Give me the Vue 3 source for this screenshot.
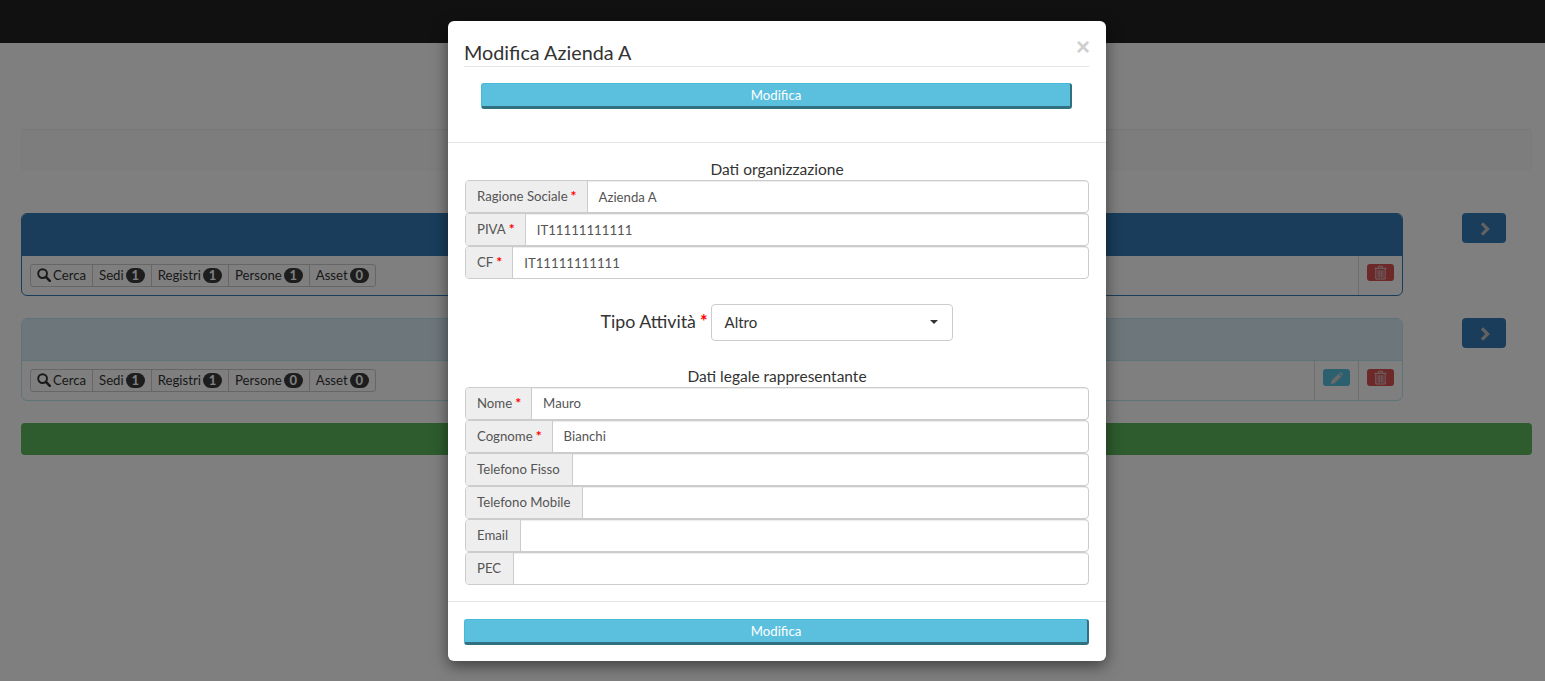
<script setup>
const panels = [
  { cls: 'primary', counts: [1, 1, 1, 0], edit: false },
  { cls: 'info', counts: [1, 1, 0, 0], edit: true },
]
const names = ['Sedi', 'Registri', 'Persone', 'Asset']
const org = [
  { label: 'Ragione Sociale', req: true, value: 'Azienda A' },
  { label: 'PIVA', req: true, value: 'IT11111111111' },
  { label: 'CF', req: true, value: 'IT11111111111' },
]
const legal = [
  { label: 'Nome', req: true, value: 'Mauro' },
  { label: 'Cognome', req: true, value: 'Bianchi' },
  { label: 'Telefono Fisso', value: '' },
  { label: 'Telefono Mobile', value: '' },
  { label: 'Email', value: '' },
  { label: 'PEC', value: '' },
]
</script>

<template>
  <div class="page">
    <div class="navbar"></div>
    <div class="content">
      <div class="well"></div>
      <div v-for="p in panels" :key="p.cls" class="row">
        <div class="panel" :class="p.cls">
          <div class="panel-head"></div>
          <div class="panel-body">
            <div class="tabs">
              <span class="tab">
                <svg class="search" viewBox="0 0 14 14" width="14" height="14">
                  <circle cx="5.6" cy="5.6" r="4.4" fill="none" stroke="currentColor" stroke-width="1.9" />
                  <path d="M8.9 8.9L12.8 12.8" stroke="currentColor" stroke-width="2.5" stroke-linecap="round" />
                </svg>
                Cerca
              </span>
              <span v-for="(n, i) in names" :key="n" class="tab">{{ n }}<b class="badge">{{ p.counts[i] }}</b></span>
            </div>
            <div class="spacer"></div>
            <div v-if="p.edit" class="cell">
              <span class="mini edit">
                <svg viewBox="0 0 14 14" width="14" height="14">
                  <path d="M.8 13.2l.9-3.6 6.9-6.9 2.7 2.7-6.9 6.9zM9.4 1.9l1-1 2.7 2.7-1 1z" fill="#d5d5d5" />
                </svg>
              </span>
            </div>
            <div class="cell">
              <span class="mini del">
                <svg viewBox="0 0 14 16" width="13" height="15">
                  <path d="M.5 3.5h13M5 3.2V1.3h4v1.9M2 4v11h10V4" fill="none" stroke="#d8d8d8" stroke-width="1" />
                  <path d="M4.5 5.5v8M6.2 5.5v8M7.9 5.5v8M9.6 5.5v8" stroke="#d8c4d8" stroke-width="1" />
                </svg>
              </span>
            </div>
          </div>
        </div>
        <div class="go">
          <svg viewBox="0 0 12 16" width="12" height="16">
            <path d="M3 2.4L8.6 8 3 13.6" fill="none" stroke="#c4c4c4" stroke-width="3.2" />
          </svg>
        </div>
      </div>
      <div class="green"></div>
    </div>

    <div class="overlay"></div>

    <div class="modal">
      <div class="modal-head">
        <span class="close">×</span>
        <h4 class="title">Modifica Azienda A</h4>
        <div class="top-btn-wrap"><div class="btn">Modifica</div></div>
      </div>
      <div class="modal-body">
        <div class="section-title">Dati organizzazione</div>
        <div v-for="f in org" :key="f.label" class="group">
          <span class="addon">{{ f.label }}<i v-if="f.req" class="req">*</i></span>
          <span class="input">{{ f.value }}</span>
        </div>
        <div class="type-row">
          <span class="type-label">Tipo Attività<i class="req big">*</i></span>
          <div class="select">
            <span>Altro</span>
            <span class="caret"></span>
          </div>
        </div>
        <div class="section-title">Dati legale rappresentante</div>
        <div v-for="f in legal" :key="f.label" class="group legal">
          <span class="addon">{{ f.label }}<i v-if="f.req" class="req">*</i></span>
          <span class="input">{{ f.value }}</span>
        </div>
      </div>
      <div class="modal-foot"><div class="btn">Modifica</div></div>
    </div>
  </div>
</template>

<style>
html, body { margin: 0; overflow: hidden; }
</style>

<style scoped>
.page {
  height: 681px;
  overflow: hidden;
  position: relative;
  background: #fff;
  font-family: Lato, "Liberation Sans", sans-serif;
  font-size: 13.2px;
  color: #333;
}
.navbar { height: 43px; background: #222; }
.content { padding: 86px 13px 0 21px; }
.well {
  height: 41px;
  background: #fafafa;
  border-radius: 4px;
  border: 1px solid #f6f6f6;
  border-top-color: #eee;
  box-sizing: border-box;
  margin-bottom: 43px;
}
.row { display: flex; align-items: flex-start; margin-bottom: 22px; }
.panel {
  width: 1382px;
  box-sizing: border-box;
  border: 1px solid;
  border-radius: 6px;
  overflow: hidden;
  background: #fff;
}
.panel.primary { border-color: #337ab7; }
.panel.info { border-color: #bce8f1; }
.panel-head { height: 42px; }
.panel.primary .panel-head { background: #337ab7; }
.panel.info .panel-head { background: #d9edf7; border-bottom: 1px solid #bce8f1; height: 41px; }
.panel-body { display: flex; height: 39px; }
.tabs {
  display: flex;
  align-self: flex-start;
  margin: 8px 0 0 8px;
  height: 23px;
  border: 1px solid #ccc;
  border-radius: 3px;
  box-sizing: border-box;
}
.tab {
  display: flex;
  align-items: center;
  padding: 0 6px 1px;
  border-right: 1px solid #ccc;
  white-space: nowrap;
  font-size: 13.2px;
}
.tab:last-child { border-right: 0; }
.search { margin-right: 2px; color: #333; }
.badge {
  display: inline-block;
  margin-left: 2px;
  min-width: 19px;
  height: 15px;
  line-height: 15px;
  border-radius: 8px;
  background: #3a3a3a;
  color: #fff;
  font-size: 13px;
  text-align: center;
  font-weight: 700;
}
.spacer { flex: 1; }
.cell {
  width: 44px;
  box-sizing: border-box;
  border-left: 1px solid #ddd;
  padding: 8px 0 0 8px;
}
.mini {
  display: flex;
  align-items: center;
  justify-content: center;
  width: 27px;
  height: 17px;
  border-radius: 3px;
}
.mini.edit { background: #5bc0de; }
.mini.del { background: #d9534f; }
.go {
  margin-left: 59px;
  width: 44px;
  height: 30px;
  padding: 2px 0 0 2px;
  box-sizing: border-box;
  background: #337ab7;
  border-radius: 4px;
  display: flex;
  align-items: center;
  justify-content: center;
}
.green {
  height: 32px;
  background: #5cb85c;
  border-radius: 4px;
}
.overlay {
  position: absolute;
  inset: 0;
  background: rgba(0, 0, 0, 0.5);
}
.modal {
  position: absolute;
  left: 448px;
  top: 21px;
  width: 658px;
  height: 640px;
  background: #fff;
  border-radius: 6px;
  box-shadow: 0 5px 15px rgba(0, 0, 0, 0.5);
  box-sizing: border-box;
  display: flex;
  flex-direction: column;
}
.modal-head {
  position: relative;
  height: 122px;
  box-sizing: border-box;
  border-bottom: 1px solid #e5e5e5;
  padding: 20px 17px 0 16px;
}
.close {
  position: absolute;
  right: 16px;
  top: 14px;
  font-family: "Liberation Sans", sans-serif;
  font-size: 24px;
  line-height: 1;
  font-weight: 700;
  color: #cfcfcf;
}
.title {
  margin: 0;
  font-size: 19.8px;
  font-weight: 400;
  line-height: 22px;
  height: 25px;
  border-bottom: 1px solid #e5e5e5;
  color: #333;
}
.top-btn-wrap { padding: 16px 17px 0; }
.btn {
  box-sizing: border-box;
  height: 26px;
  line-height: 22px;
  padding-bottom: 2px;
  text-align: center;
  color: #fff;
  font-size: 13.2px;
  background: #5bc0de;
  border: 1px solid #46b8da;
  border-right: 2px solid #31707f;
  border-bottom: 3px solid #31707f;
  border-radius: 3px;
}
.modal-body {
  flex: 1;
  padding: 18px 17px 0;
}
.section-title {
  text-align: center;
  font-size: 15.5px;
  line-height: 16px;
  color: #333;
  height: 19px;
}
.group {
  display: flex;
  height: 33px;
  box-sizing: border-box;
  border: 1px solid #ccc;
  border-radius: 4px;
  overflow: hidden;
  font-size: 13.2px;
}
.addon {
  display: flex;
  align-items: center;
  padding: 0 12px 2px 11px;
  background: #eee;
  border-right: 1px solid #ccc;
  color: #555;
  white-space: nowrap;
}
.input {
  flex: 1;
  display: flex;
  align-items: center;
  padding-left: 11px;
  color: #555;
  box-shadow: inset 0 1px 1px rgba(0, 0, 0, 0.075);
}
.group.legal .input { padding-bottom: 2px; }
.req {
  color: #f00;
  font-style: normal;
  font-weight: 700;
  font-size: 14px;
  margin: 0 -2px 1px 3px;
}
.type-row {
  display: flex;
  justify-content: center;
  align-items: center;
  gap: 3px;
  padding-right: 1px;
  margin: 25px 0 27px;
  height: 37px;
}
.type-label { font-size: 17.8px; color: #333; padding-bottom: 3px; }
.req.big { font-size: 18px; margin: 0 0 0 4px; }
.select {
  width: 242px;
  height: 37px;
  box-sizing: border-box;
  border: 1px solid #ccc;
  border-radius: 4px;
  display: flex;
  align-items: center;
  justify-content: space-between;
  padding: 0 13px 2px;
  font-size: 15px;
  color: #333;
}
.caret {
  width: 0;
  height: 0;
  border-left: 4px solid transparent;
  border-right: 4px solid transparent;
  border-top: 4px solid #333;
  margin-right: 1px;
}
.modal-foot {
  height: 60px;
  box-sizing: border-box;
  border-top: 1px solid #e5e5e5;
  padding: 17px 17px 0 16px;
}
</style>
